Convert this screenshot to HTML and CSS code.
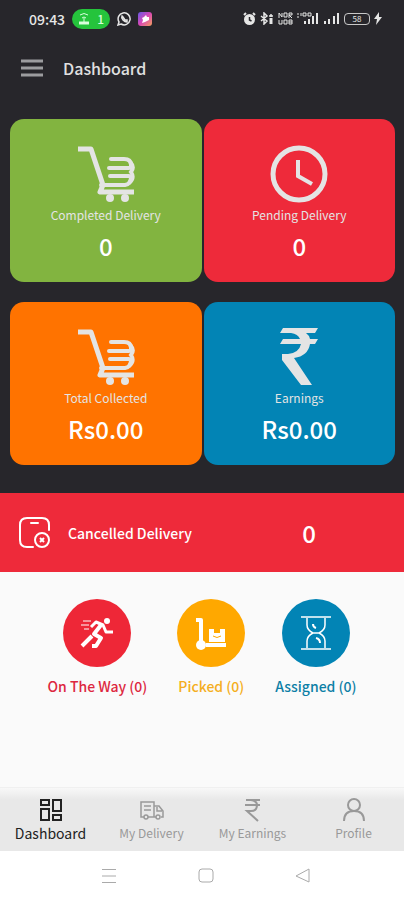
FILE: index.html
```html
<!DOCTYPE html>
<html lang="en">
<head>
<meta charset="utf-8">
<meta name="viewport" content="width=device-width, initial-scale=1">
<title>Dashboard</title>
<link rel="stylesheet" href="styles.css">
</head>
<body>
<svg class="defs" aria-hidden="true">
  <symbol id="cart" viewBox="0 0 58 58">
    <g fill="none" stroke="currentColor" stroke-width="5">
      <path d="M1 4h13l12 36-3 7h34" stroke-linejoin="round"/>
      <path d="M24 40h24q6-1 6-8M34 14h13q7 0 7 6v3M32 23h20M33 31h19" stroke-linecap="round" stroke-width="4"/>
      <path d="M53 17q5 5 1 10 4 6-2 11" stroke-width="4"/>
    </g>
    <circle cx="33" cy="53" r="4" fill="currentColor"/>
    <circle cx="48" cy="53" r="4" fill="currentColor"/>
  </symbol>
  <symbol id="rupee" viewBox="0 0 40 58">
    <path fill="currentColor" d="M4 0h35l-3 5h-9q3 2 4 6h8l-3 5h-5q-2 12-16 14l18 27H22L3 32v-6h6q11-1 13-10H1l3-5h17q-2-5-9-6H1z"/>
  </symbol>
</svg>
<div class="screen">
  <div class="top">
    <div class="status">
      <span class="time">09:43</span>
      <span class="hotspot">
        <svg width="12" height="14" viewBox="0 0 12 14" fill="none" stroke="currentColor"><path d="M2 3q4-3 8 0M4 6q2-2 4 0M6 6v4"/><path d="M1 11h10" stroke-width="3"/></svg>
        <span>1</span>
      </span>
      <svg width="14" height="14" viewBox="0 0 14 14" fill="none" stroke="currentColor" stroke-width="1.5"><path d="M1 13l1-3a6 6 0 1 1 2 2z"/><path d="M5 4q-1 2 1 4t4 2l0-2-2 0-2-3z"/></svg>
      <svg class="social" width="14" height="14" viewBox="0 0 14 14">
        <defs><linearGradient id="mix" x1="0" y1="0" x2="1" y2="1"><stop offset="0" stop-color="#6659e8"/><stop offset=".5" stop-color="#d948b5"/><stop offset="1" stop-color="#f5a05a"/></linearGradient></defs>
        <rect width="14" height="14" rx="3" fill="url(#mix)"/><path d="M8 3l1 2h2v3l-2 1-2 1-3 1 1-3-1-2 2-1z" fill="#fff"/>
      </svg>
      <span class="signals">
        <svg width="13" height="13" viewBox="0 0 13 13"><circle cx="6.500" cy="7.500" r="5.500" fill="currentColor"/><path d="M1 3l2-2M12 3l-2-2" stroke="currentColor" stroke-width="2"/><path d="M6.500 5v3l2 1" fill="none" stroke="#27262b" stroke-width="1.500"/></svg>
        <svg width="14" height="13" viewBox="0 0 14 13" fill="none" stroke="currentColor" stroke-width="1.500"><path d="M1 4l6 5-3 3V1l3 3-6 5M11 2v3M9 4h4"/><path d="M11 6v6" stroke-width="3"/></svg>
        <svg width="15" height="13" viewBox="0 0 15 13" fill="none" stroke="currentColor"><path d="M1 6V1l3 4V1M6 1h3v4H6zM11 6V1h3v2h-3l3 3M1 8v4h3V8M6 8h3v4H6zM11 8h3v4h-3zM11 10h3"/></svg>
        <svg width="22" height="13" viewBox="0 0 22 13" stroke="currentColor" stroke-width="2"><path d="M8 12V9M12 12V7M16 12V4M20 12V1"/><path d="M1 1v2M1 4v2M4 1v3M6 1h3v3H6zM11 1h3v3h-3z" fill="none" stroke-width="1"/></svg>
        <svg width="17" height="13" viewBox="0 0 17 13" stroke="currentColor" stroke-width="2"><path d="M2 12V9M6 12V7M11 12V4M15 12V1"/></svg>
        <span class="battery">58</span>
        <svg width="8" height="13" viewBox="0 0 8 13"><path d="M5 0L0 7h3l-1 6 6-8H5z" fill="currentColor"/></svg>
      </span>
    </div>
    <header class="bar">
      <button class="menu" aria-label="Open menu"><svg width="22" height="18" viewBox="0 0 22 18" stroke="currentColor" stroke-width="3"><path d="M0 2h22M0 9h22M0 16h22"/></svg></button>
      <h1>Dashboard</h1>
    </header>
    <section class="cards">
      <article class="card green"><svg class="icon"><use href="#cart"/></svg><h2>Completed Delivery</h2><p>0</p></article>
      <article class="card red"><svg class="icon" viewBox="0 0 58 58" fill="none" stroke="currentColor" stroke-width="5"><circle cx="29" cy="29" r="26"/><path d="M28 15v16l14 8" stroke-width="4"/></svg><h2>Pending Delivery</h2><p>0</p></article>
      <article class="card orange"><svg class="icon"><use href="#cart"/></svg><h2>Total Collected</h2><p>Rs0.00</p></article>
      <article class="card blue"><svg class="icon"><use href="#rupee"/></svg><h2>Earnings</h2><p>Rs0.00</p></article>
    </section>
  </div>
  <section class="cancelled">
    <svg width="33" height="33" viewBox="0 0 33 33" fill="none" stroke="currentColor" stroke-width="2"><path d="M15 31H9q-7 0-7-7V9q0-7 7-7h15q7 0 7 7v5M13 7h7" stroke-linecap="round"/><circle cx="24" cy="24" r="7"/><path d="M22 22l4 4M26 22l-4 4"/></svg>
    <h2>Cancelled Delivery</h2>
    <p>0</p>
  </section>
  <section class="stages">
    <a class="stage way" href="#way"><span class="disc"><svg width="34" height="34" viewBox="0 0 34 34" fill="none" stroke="currentColor" stroke-width="4" stroke-linejoin="round"><circle cx="27" cy="5" r="3" fill="currentColor" stroke="none"/><path d="M11 11l5-5 7 3 3 7 7 0" stroke-width="3"/><path d="M21 9l-7 9 7 4-5 8h-4M12 20L2 30"/><path d="M3 5h8M1 9h8M4 13h5" stroke-width="1"/></svg></span><span>On The Way (0)</span></a>
    <a class="stage picked" href="#picked"><span class="disc"><svg width="34" height="34" viewBox="0 0 34 34"><path d="M2 4h5v24" fill="none" stroke="currentColor" stroke-width="4" stroke-linejoin="round"/><circle cx="7" cy="29" r="5" fill="currentColor"/><path d="M12 27h20v4H12zM15 13h5v4h6v-4h5v13H15z" fill="currentColor"/><path d="M19 20q4 3 8 0" stroke="#ffa800" fill="none"/></svg></span><span>Picked (0)</span></a>
    <a class="stage assigned" href="#assigned"><span class="disc"><svg width="34" height="34" viewBox="0 0 34 34" fill="none" stroke="currentColor" stroke-width="2"><path d="M2 1h30M2 33h30M8 2v7q0 5 6 8-6 3-6 8v7M26 2v7q0 5-6 8 6 3 6 8v7M14 17h6" stroke-width="1.500"/><path d="M14 8q0 3 3 4M17 22q4 1 4 5"/></svg></span><span>Assigned (0)</span></a>
  </section>
  <nav class="tabs">
    <a class="tab active" href="#dashboard"><svg width="24" height="24" viewBox="0 0 24 24" fill="none" stroke="currentColor" stroke-width="2"><path d="M2 2h8v5H2zM14 2h8v11h-8zM2 11h8v11H2zM14 17h8v5h-8z"/></svg><span>Dashboard</span></a>
    <a class="tab" href="#delivery"><svg width="24" height="24" viewBox="0 0 24 24" fill="none" stroke="currentColor" stroke-width="1.500"><path d="M4 19H1V4h13v15H8M14 8h5l4 5v6h-2M16 19h-2M4 8h7M4 12h7M17 9v4h5"/><circle cx="6" cy="19" r="2"/><circle cx="18" cy="19" r="2"/></svg><span>My Delivery</span></a>
    <a class="tab" href="#earnings"><svg width="24" height="24" viewBox="0 0 24 24" fill="none" stroke="currentColor" stroke-width="2"><path d="M5 2h14M4 7h15M6 2h4q6 1 6 5 0 6-6 6H6l11 10"/></svg><span>My Earnings</span></a>
    <a class="tab" href="#profile"><svg width="24" height="24" viewBox="0 0 24 24" fill="none" stroke="currentColor" stroke-width="2"><circle cx="12" cy="7" r="6"/><path d="M2 23q0-10 10-10t10 10"/></svg><span>Profile</span></a>
  </nav>
  <div class="system">
    <button aria-label="Recent apps"><svg width="16" height="16" viewBox="0 0 16 16" stroke="currentColor"><path d="M1 1.500h14M1 8h14M1 14.500h14"/></svg></button>
    <button aria-label="Home"><svg width="16" height="16" viewBox="0 0 16 16" fill="none" stroke="currentColor"><rect x="1" y="1" width="14" height="13" rx="3"/></svg></button>
    <button aria-label="Back"><svg width="16" height="16" viewBox="0 0 16 16" fill="none" stroke="currentColor"><path d="M14 1v13L1 8z" stroke-linejoin="round"/></svg></button>
  </div>
</div>
</body>
</html>
```
FILE: styles.css
```css
* { box-sizing: border-box; }
body { margin: 0; background: #fff; font-family: "Noto Sans CJK SC", "Noto Sans", sans-serif; }
h1, h2, p { margin: 0; }
button { padding: 0; border: 0; background: none; color: inherit; }
a { color: inherit; text-decoration: none; }
svg { display: block; flex: none; }
.defs { position: absolute; width: 0; height: 0; }
.screen { display: flex; flex-direction: column; min-height: 100vh; background: #fafafa; }
.top { padding-bottom: 28px; background: #27262b; }

.status { display: flex; align-items: center; gap: 7px; height: 37px; padding: 0 22px 0 29px; color: #e6e6e6; }
.time { font-size: 14px; font-weight: 500; line-height: 20px; }
.hotspot { display: flex; align-items: center; justify-content: center; gap: 7px; width: 38px; height: 20px; border-radius: 10px; background: #25c43c; color: #d9ffdc; font-size: 12px; font-weight: 500; line-height: 20px; }
.signals { display: flex; align-items: center; gap: 4px; margin-left: auto; }
.battery { width: 26px; height: 12px; border: 1px solid #c8c8c8; border-radius: 4px; font-size: 8px; line-height: 10px; text-align: center; }

.bar { display: flex; align-items: center; gap: 20px; height: 62px; padding-left: 21px; color: #e0e0e0; }
.menu { color: #9c9c9f; }
.bar h1 { font-size: 16px; font-weight: 500; line-height: 24px; }

.cards { display: grid; grid-template-columns: 1fr 1fr; gap: 20px 2px; padding: 20px 9px 0 10px; }
.card { display: flex; flex-direction: column; align-items: center; height: 163px; padding-top: 26px; border-radius: 14px; color: #e4e4e4; }
.icon { width: 58px; height: 58px; }
.card h2 { margin-top: 2px; font-size: 12px; font-weight: 400; line-height: 20px; }
.card p { margin-top: 4px; color: #fff; font-size: 24px; font-weight: 500; line-height: 34px; }
.green { background: #82b440; }
.red { background: #ee2a3a; }
.orange { background: #ff7300; }
.blue { background: #0284b5; }

.cancelled { display: grid; grid-template-columns: 33px 1fr 190px; align-items: center; column-gap: 17px; height: 79px; padding-left: 18px; background: #ee2a3a; color: #fff; }
.cancelled h2 { font-size: 14px; font-weight: 500; line-height: 22px; white-space: nowrap; }
.cancelled p { font-size: 24px; font-weight: 500; line-height: 34px; text-align: center; }

.stages { display: flex; flex: 1; justify-content: center; align-items: flex-start; gap: 30px; padding-top: 27px; }
.stage { display: flex; flex-direction: column; align-items: center; gap: 8px; font-size: 14px; font-weight: 500; line-height: 22px; }
.disc { display: grid; place-items: center; width: 68px; height: 68px; border-radius: 50%; color: #fff; }
.way { color: #dd2740; }
.way .disc { background: #ee2737; }
.picked { color: #f5ae20; }
.picked .disc { background: #ffa800; }
.assigned { color: #0c7fa6; }
.assigned .disc { background: #0284b5; }

.tabs { display: grid; grid-template-columns: repeat(4, 1fr); height: 64px; padding-top: 8px; border-top: 1px solid #f0f0f0; background: linear-gradient(#f8f8f8, #e8e8e8 12px); color: #999; }
.tab { display: flex; flex-direction: column; align-items: center; gap: 1px; padding-top: 2px; font-size: 12px; line-height: 20px; }
.active { color: #222; font-size: 14px; }
.system { display: flex; justify-content: center; align-items: center; gap: 81px; height: 49px; padding-left: 7px; background: #fff; color: #aaa; }
```
